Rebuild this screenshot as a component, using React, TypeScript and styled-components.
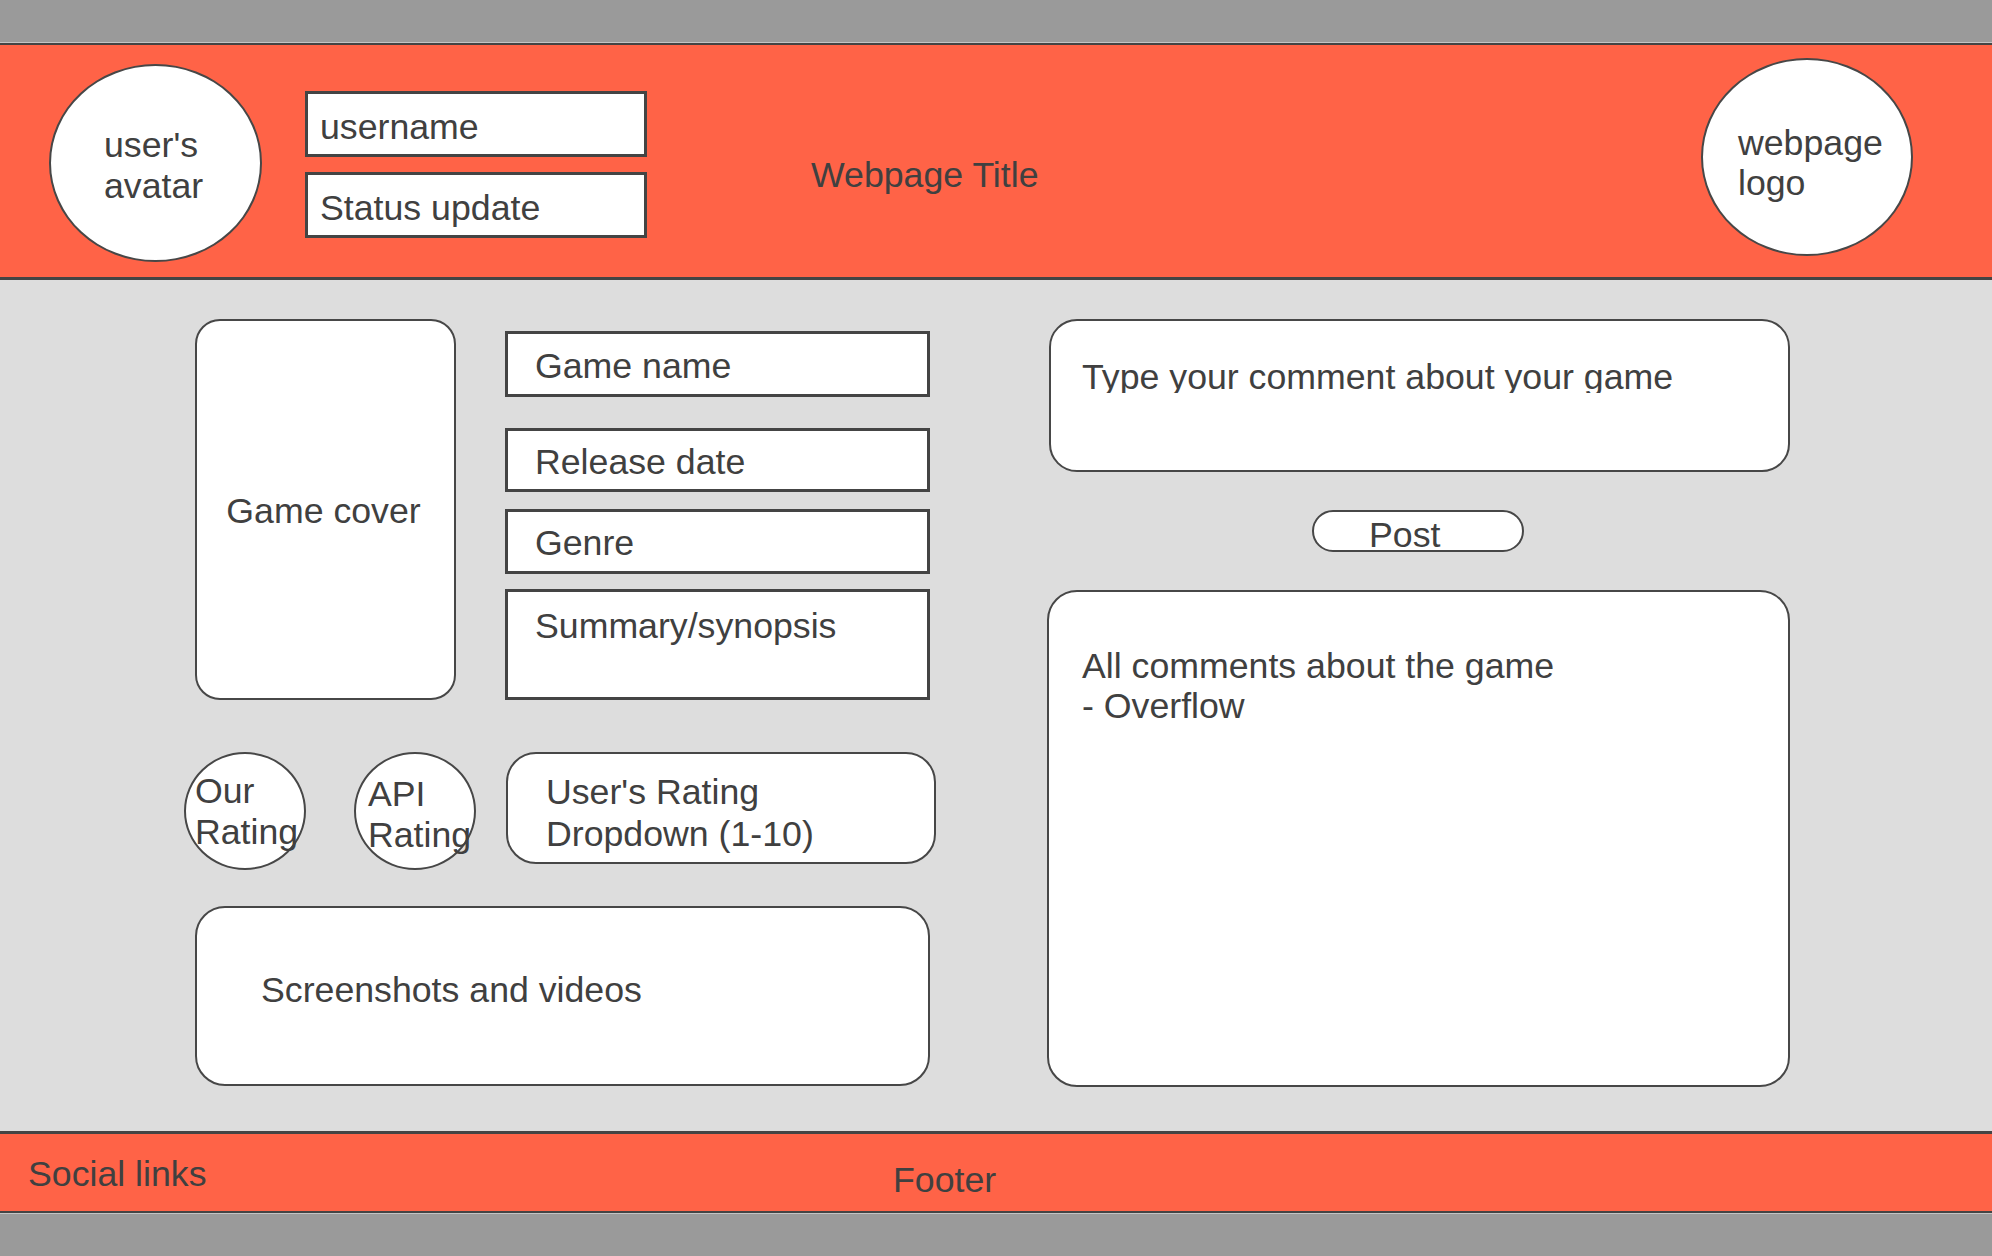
import React from "react";
import styled, { createGlobalStyle } from "styled-components";

const GlobalStyle = createGlobalStyle`
  html, body {
    margin: 0;
    padding: 0;
  }
  body {
    font-family: "Liberation Sans", Arial, sans-serif;
    color: #404040;
    background: #999999;
  }
`;

const Page = styled.div`
  width: 1992px;
  height: 1256px;
  display: flex;
  flex-direction: column;
  overflow: hidden;
  font-size: 35.7px;
`;

const GreyBand = styled.div<{ $edge: "top" | "bottom" }>`
  height: 42px;
  flex-shrink: 0;
  background: #9a9a9a;
  ${(p) =>
    p.$edge === "top"
      ? "border-bottom: 1px solid #c4c4c4;"
      : "border-top: 1px solid #c4c4c4;"}
`;

const Header = styled.header`
  height: 232px;
  flex-shrink: 0;
  background: #ff6347;
  border-top: 2px solid #444;
  border-bottom: 3px solid #444;
  display: flex;
  align-items: flex-start;
`;

const Ellipse = styled.div<{
  $w: number;
  $h: number;
  $pt: number;
  $pl: number;
  $lh: number;
}>`
  box-sizing: border-box;
  flex-shrink: 0;
  width: ${(p) => p.$w}px;
  height: ${(p) => p.$h}px;
  border: 2px solid #474747;
  border-radius: 50%;
  background: #fff;
  padding: ${(p) => p.$pt}px 0 0 ${(p) => p.$pl}px;
  line-height: ${(p) => p.$lh}px;
  white-space: nowrap;
`;

const Avatar = styled(Ellipse)`
  margin: 19px 0 0 49px;
`;

const Logo = styled(Ellipse)`
  margin: 13px 79px 0 auto;
`;

const UserStack = styled.div`
  width: 342px;
  margin: 46px 0 0 43px;
  display: flex;
  flex-direction: column;
  gap: 15px;
`;

const UserField = styled.div`
  box-sizing: border-box;
  height: 66px;
  border: 3px solid #444;
  background: #fff;
  padding: 5px 0 0 12px;
  display: flex;
  align-items: center;
  line-height: 40px;
`;

const Title = styled.div`
  margin: 110px 0 0 164px;
  line-height: 40px;
`;

const Main = styled.main`
  box-sizing: border-box;
  height: 851px;
  flex-shrink: 0;
  background: #dddddd;
  padding: 39px 0 0 184px;
  display: flex;
  align-items: flex-start;
`;

const LeftColumn = styled.div`
  width: 752px;
  display: flex;
  flex-direction: column;
  align-items: flex-start;
`;

const InfoRow = styled.div`
  display: flex;
  align-items: flex-start;
  gap: 49px;
  margin-left: 11px;
`;

const Card = styled.div<{
  $w: number;
  $h: number;
  $r: number;
  $pt?: number;
  $pl?: number;
  $lh?: number;
}>`
  box-sizing: border-box;
  flex-shrink: 0;
  width: ${(p) => p.$w}px;
  height: ${(p) => p.$h}px;
  border: 2px solid #474747;
  border-radius: ${(p) => p.$r}px;
  background: #fff;
  padding: ${(p) => p.$pt ?? 0}px 0 0 ${(p) => p.$pl ?? 0}px;
  line-height: ${(p) => p.$lh ?? 40}px;
  white-space: nowrap;
`;

const GameCover = styled(Card)`
  display: flex;
  align-items: center;
  justify-content: center;
  padding: 3px 4px 0 0;
`;

const FieldStack = styled.div`
  width: 425px;
  margin-top: 12px;
  display: flex;
  flex-direction: column;
`;

const Field = styled.div<{ $h: number; $mt: number; $top?: boolean }>`
  box-sizing: border-box;
  height: ${(p) => p.$h}px;
  margin-top: ${(p) => p.$mt}px;
  border: 3px solid #444;
  background: #fff;
  padding: ${(p) => (p.$top ? "14px" : "3px")} 0 0 27px;
  display: flex;
  align-items: ${(p) => (p.$top ? "flex-start" : "center")};
  line-height: 40px;
`;

const RatingRow = styled.div`
  display: flex;
  align-items: flex-start;
  margin-top: 52px;
`;

const RatingCircle = styled(Ellipse)<{ $ml?: number }>`
  margin-left: ${(p) => p.$ml ?? 0}px;
`;

const Dropdown = styled(Card)`
  margin-left: 30px;
`;

const Media = styled(Card)`
  margin: 36px 0 0 11px;
`;

const RightColumn = styled.div`
  margin-left: 111px;
  display: flex;
  flex-direction: column;
  align-items: flex-start;
`;

const CommentInput = styled(Card)`
  margin-left: 2px;
`;

/* the reference clips the descenders of the placeholder line */
const ClipLine = styled.div`
  height: 36px;
  overflow: hidden;
`;

const PostButton = styled.button`
  box-sizing: border-box;
  width: 212px;
  height: 42px;
  margin: 38px 0 0 265px;
  border: 2px solid #474747;
  border-radius: 21px;
  background: #fff;
  padding: 3px 0 0 55px;
  display: flex;
  align-items: flex-start;
  font: inherit;
  line-height: 40px;
  color: #404040;
  cursor: pointer;
`;

const Comments = styled(Card)`
  margin-top: 38px;
`;

const Footer = styled.footer`
  height: 77px;
  flex-shrink: 0;
  background: #ff6347;
  border-top: 3px solid #444;
  border-bottom: 2px solid #444;
  display: flex;
  align-items: flex-start;
  padding-left: 28px;
  line-height: 40px;
`;

const FooterSlot = styled.div<{ $w?: number; $mt: number }>`
  ${(p) => (p.$w ? `width: ${p.$w}px;` : "")}
  margin-top: ${(p) => p.$mt}px;
`;

export default function App() {
  return (
    <>
      <GlobalStyle />
      <Page>
        <GreyBand $edge="top" />
        <Header>
          <Avatar $w={213} $h={198} $pt={59} $pl={53} $lh={41}>
            user's
            <br />
            avatar
          </Avatar>
          <UserStack>
            <UserField>username</UserField>
            <UserField>Status update</UserField>
          </UserStack>
          <Title>Webpage Title</Title>
          <Logo $w={212} $h={198} $pt={63} $pl={35} $lh={40}>
            webpage
            <br />
            logo
          </Logo>
        </Header>

        <Main>
          <LeftColumn>
            <InfoRow>
              <GameCover $w={261} $h={381} $r={25}>
                Game cover
              </GameCover>
              <FieldStack>
                <Field $h={66} $mt={0}>
                  Game name
                </Field>
                <Field $h={64} $mt={31}>
                  Release date
                </Field>
                <Field $h={65} $mt={17}>
                  Genre
                </Field>
                <Field $h={111} $mt={15} $top>
                  Summary/synopsis
                </Field>
              </FieldStack>
            </InfoRow>

            <RatingRow>
              <RatingCircle $w={122} $h={118} $pt={17} $pl={9} $lh={41}>
                Our
                <br />
                Rating
              </RatingCircle>
              <RatingCircle
                $w={122}
                $h={118}
                $pt={20}
                $pl={12}
                $lh={41}
                $ml={48}
              >
                API
                <br />
                Rating
              </RatingCircle>
              <Dropdown $w={430} $h={112} $r={30} $pt={17} $pl={38} $lh={42}>
                User's Rating
                <br />
                Dropdown (1-10)
              </Dropdown>
            </RatingRow>

            <Media $w={735} $h={180} $r={30} $pt={62} $pl={64}>
              Screenshots and videos
            </Media>
          </LeftColumn>

          <RightColumn>
            <CommentInput $w={741} $h={153} $r={28} $pt={36} $pl={31}>
              <ClipLine>Type your comment about your game</ClipLine>
            </CommentInput>
            <PostButton type="button">Post</PostButton>
            <Comments $w={743} $h={497} $r={30} $pt={54} $pl={33}>
              All comments about the game
              <br />- Overflow
            </Comments>
          </RightColumn>
        </Main>

        <Footer>
          <FooterSlot $w={865} $mt={20}>
            Social links
          </FooterSlot>
          <FooterSlot $mt={26}>Footer</FooterSlot>
        </Footer>
        <GreyBand $edge="bottom" />
      </Page>
    </>
  );
}
